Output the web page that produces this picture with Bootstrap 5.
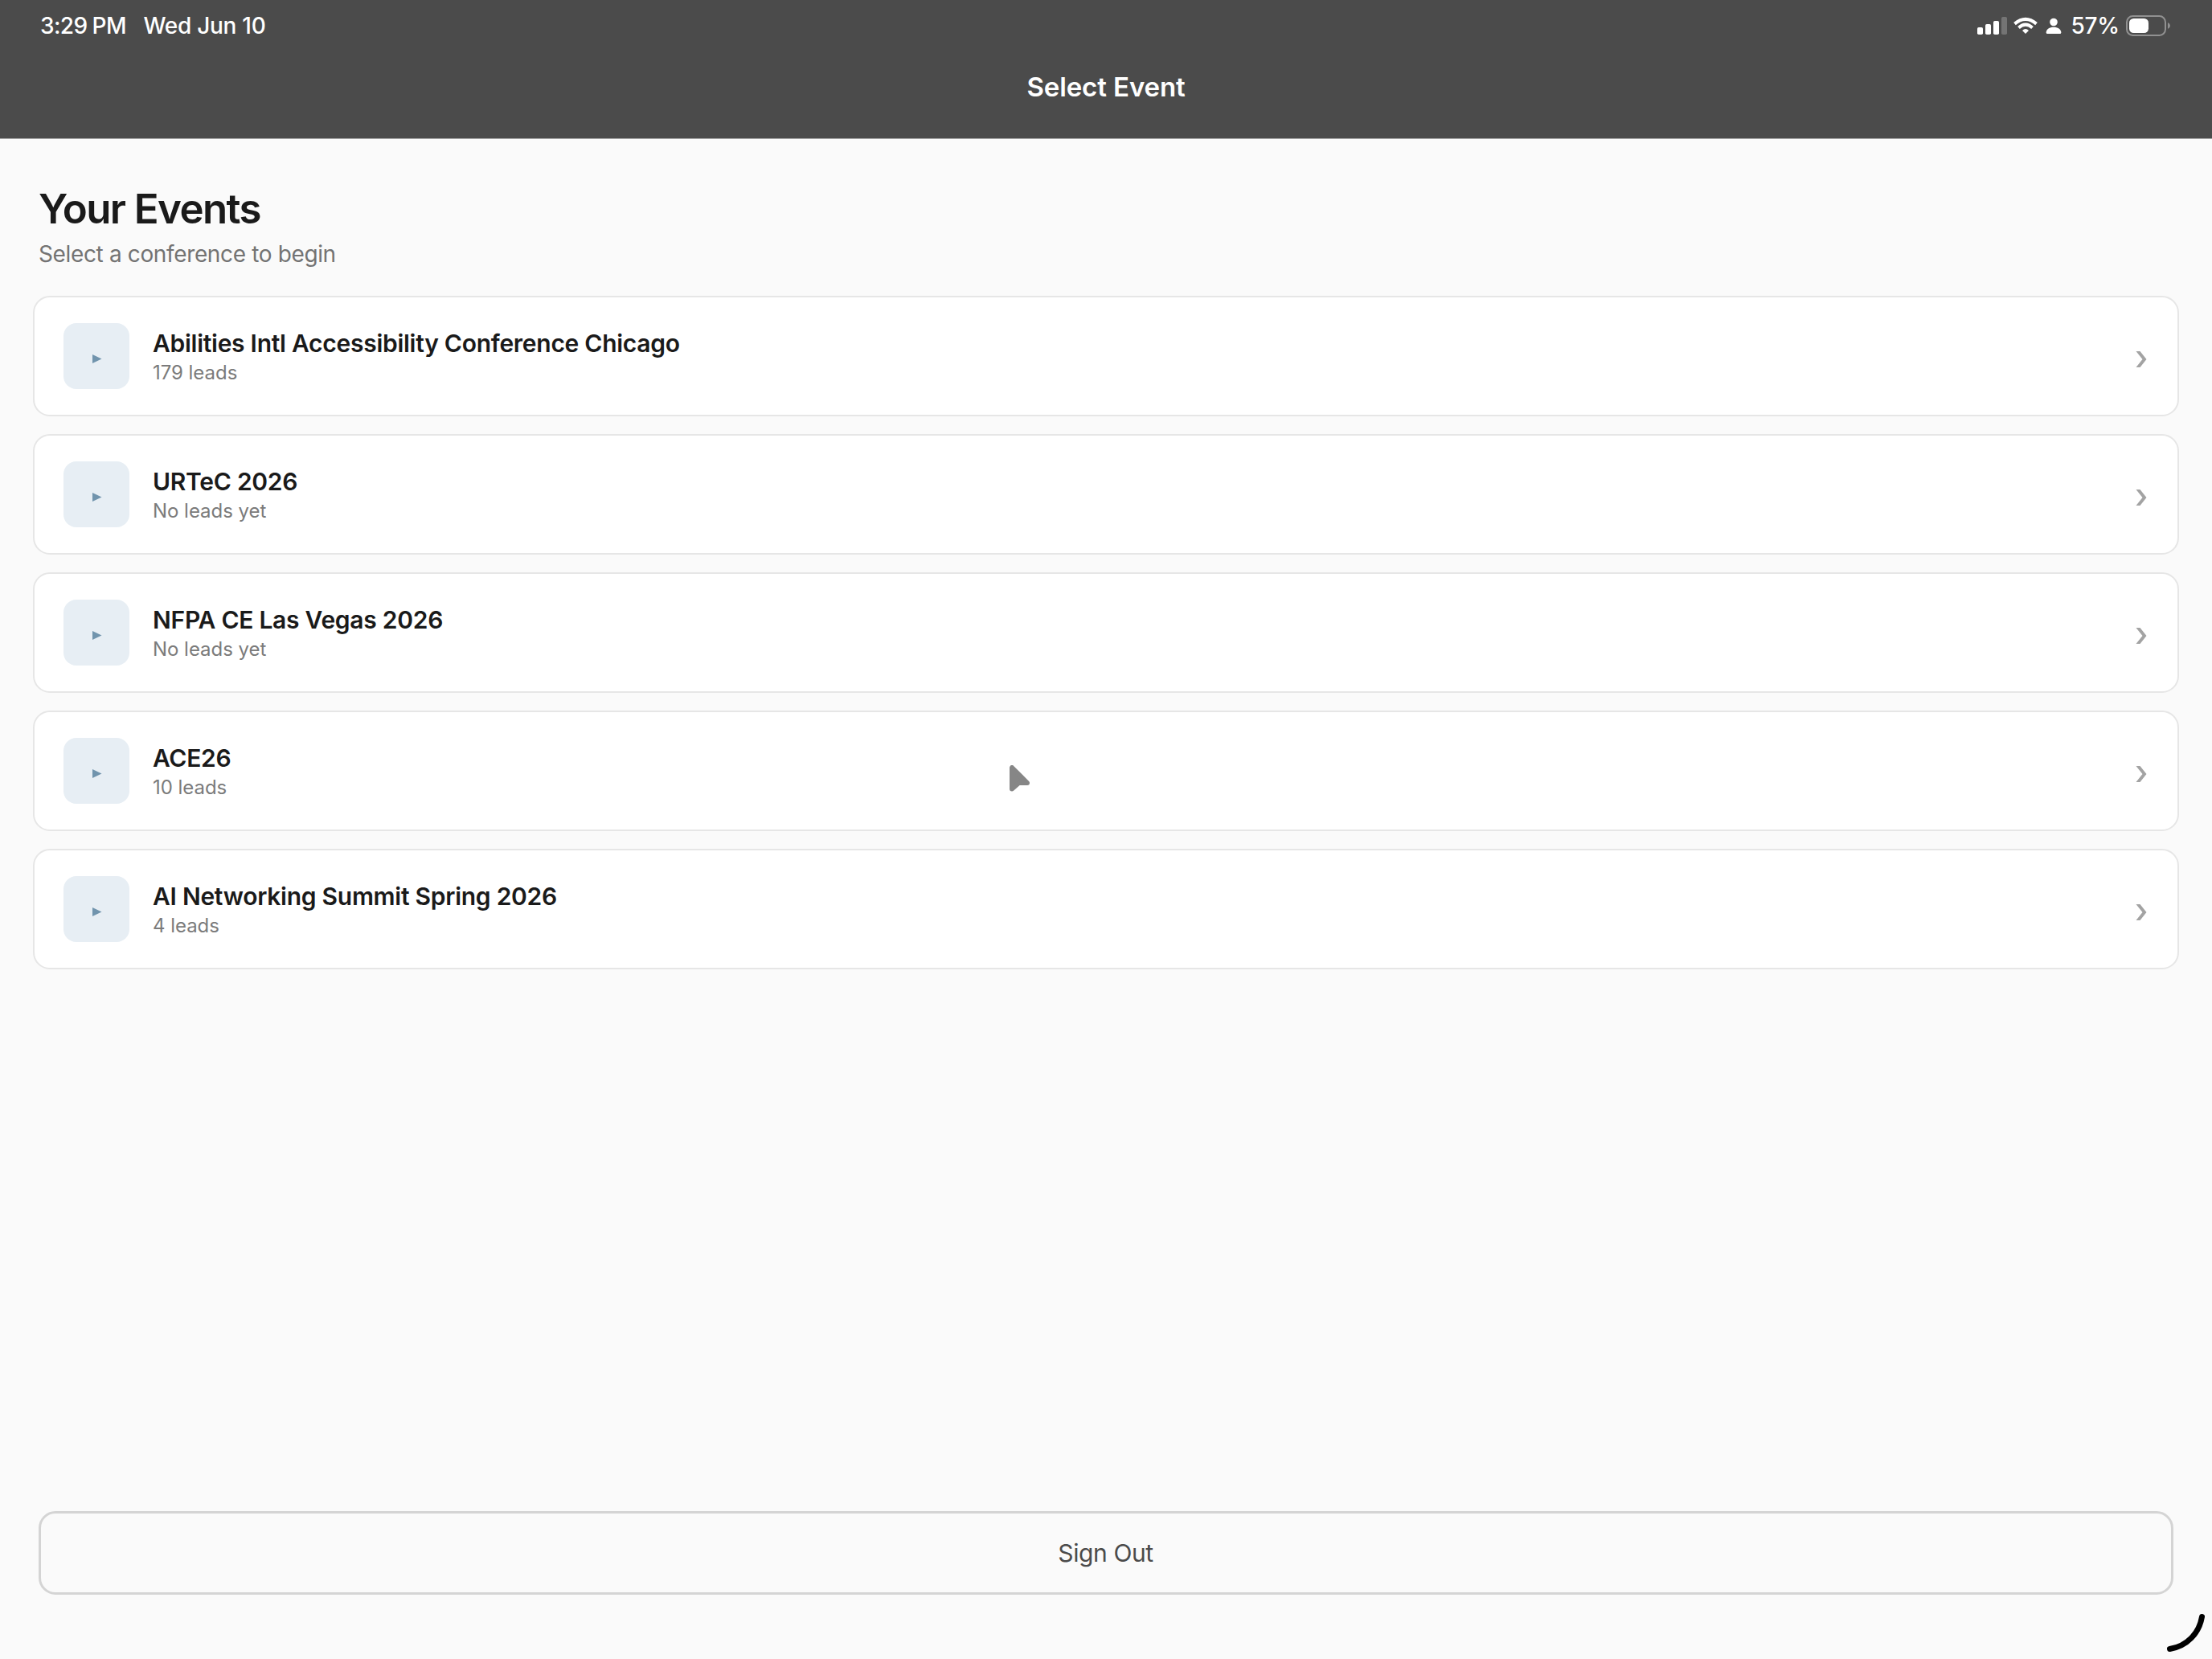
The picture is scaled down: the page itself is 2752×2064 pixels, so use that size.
<!DOCTYPE html>
<html lang="en">
<head>
<meta charset="utf-8">
<meta name="viewport" content="width=device-width, initial-scale=1">
<title>Select Event</title>
<link rel="stylesheet" href="https://cdn.jsdelivr.net/npm/bootstrap@5.3.0/dist/css/bootstrap.min.css">
<style>
  html, body { height: 100%; }
  body { font-family: Inter, "Liberation Sans", sans-serif; background: #fafafa; color: #1a1a1a; overflow: hidden; }
  svg { display: block; flex: none; }
  .app-header { height: 173px; background: #4b4b4b; border-bottom: 1px solid #a9a9a9; color: #fff; }
  .status-bar { height: 64px; padding: 0 51px 0 50px; font-size: 28px; font-weight: 500; line-height: 64px; }
  .status-time { letter-spacing: -.6px; margin-right: 21.5px; }
  .status-time span { margin-left: 6px; }
  .status-date { letter-spacing: -.28px; }
  .status-wifi { margin-left: 7px; }
  .status-person { margin-left: 10px; }
  .status-pct { width: 80px; padding-left: 11.5px; letter-spacing: -.3px; }
  .header-title { font-size: 33px; font-weight: 600; line-height: 42px; margin-top: 23px; letter-spacing: -.1px; }
  .page-head { padding: 57px 48px 0; }
  .page-title { font-size: 51px; font-weight: 600; line-height: 60px; letter-spacing: -1.6px; margin: 0; }
  .page-sub { font-size: 28px; line-height: 36px; margin: 8px 0 0; color: #737373; letter-spacing: -.36px; }
  .event-list { padding: 34px 41px 0; gap: 22px; }
  .event-card { height: 150px; border: 2px solid #e6e6e6; border-radius: 21px; padding: 0 36px; background: #fff; }
  .event-tile { width: 82px; height: 82px; border-radius: 16px; background: #e7eef4; }
  .event-text { margin-left: 29px; }
  .event-name { font-size: 30px; font-weight: 600; line-height: 38px; letter-spacing: -.27px; }
  .event-leads { font-size: 24px; line-height: 32px; padding-top: 2px; margin-bottom: -2px; color: #7b7b7b; letter-spacing: -.04px; }
  .event-chevron { margin-top: 8px; }
  .sign-out { height: 104px; margin: 0 48px 80px; border: 3px solid #d4d4d4; border-radius: 21px; background: transparent; color: #4b4b4b; font-size: 30px; letter-spacing: -.4px; padding: 0 1px 0 0; }
  .pointer { left: 1256px; top: 952px; }
  .corner-arc { left: 2690px; top: 2002px; }
</style>
</head>
<body class="d-flex flex-column">
<header class="app-header flex-shrink-0">
  <div class="status-bar d-flex align-items-center">
    <div class="status-time">3:29<span>PM</span></div>
    <div class="status-date">Wed Jun 10</div>
    <div class="d-flex align-items-center ms-auto">
      <svg width="38" height="24" viewBox="0 0 38 24" fill="#fff"><rect x="0" y="14" width="7" height="9" rx="1.8"/><rect x="10" y="10" width="7" height="13" rx="1.8"/><rect x="20" y="6" width="7" height="17" rx="1.8"/><rect x="30" y="1" width="7" height="22" rx="1.8" fill="#747474"/></svg>
      <svg class="status-wifi" width="30" height="22" viewBox="0 0 30 22" fill="none" stroke="#fff" stroke-width="4"><path d="M1.500 8.600Q15 -2.800 28.500 8.600"/><path d="M6.500 13.400Q15 6 23.500 13.400"/><path d="M15 21L11 17Q15 13.200 19 17Z" fill="#fff" stroke="none"/></svg>
      <svg class="status-person" width="20" height="22" viewBox="0 0 20 22" fill="#fff"><circle cx="10" cy="6.500" r="4.800"/><path d="M.7 19.500C.7 15.300 5 12.700 10 12.700S19.300 15.300 19.300 19.500Q19.300 21 17.800 21H2.200Q.7 21 .7 19.500Z"/></svg>
      <div class="status-pct">57%</div>
      <svg width="56" height="26" viewBox="0 0 56 26"><rect x="1" y="1" width="48" height="24" rx="7.500" fill="none" stroke="#919191" stroke-width="2"/><rect x="4" y="4" width="24" height="18" rx="5.500" fill="#fff"/><path d="M52 9Q55 10.500 55 13T52 17Z" fill="#919191"/></svg>
    </div>
  </div>
  <div class="header-title text-center">Select Event</div>
</header>
<main class="d-flex flex-column flex-grow-1">
  <div class="page-head">
    <h1 class="page-title">Your Events</h1>
    <p class="page-sub">Select a conference to begin</p>
  </div>
  <div class="event-list d-flex flex-column">
    <div class="event-card d-flex align-items-center">
      <div class="event-tile"><svg width="82" height="82"><path d="M36 39L47.500 44.500L36 50Z" fill="#7194ad"/></svg></div>
      <div class="event-text"><div class="event-name">Abilities Intl Accessibility Conference Chicago</div><div class="event-leads">179 leads</div></div>
      <svg class="event-chevron ms-auto" width="16" height="22" viewBox="0 0 16 22"><path d="M.5 1H5.500L13.500 11L5.500 21H.5L8.500 11Z" fill="#a3a3a3"/></svg>
    </div>
    <div class="event-card d-flex align-items-center">
      <div class="event-tile"><svg width="82" height="82"><path d="M36 39L47.500 44.500L36 50Z" fill="#7194ad"/></svg></div>
      <div class="event-text"><div class="event-name">URTeC 2026</div><div class="event-leads">No leads yet</div></div>
      <svg class="event-chevron ms-auto" width="16" height="22" viewBox="0 0 16 22"><path d="M.5 1H5.500L13.500 11L5.500 21H.5L8.500 11Z" fill="#a3a3a3"/></svg>
    </div>
    <div class="event-card d-flex align-items-center">
      <div class="event-tile"><svg width="82" height="82"><path d="M36 39L47.500 44.500L36 50Z" fill="#7194ad"/></svg></div>
      <div class="event-text"><div class="event-name">NFPA CE Las Vegas 2026</div><div class="event-leads">No leads yet</div></div>
      <svg class="event-chevron ms-auto" width="16" height="22" viewBox="0 0 16 22"><path d="M.5 1H5.500L13.500 11L5.500 21H.5L8.500 11Z" fill="#a3a3a3"/></svg>
    </div>
    <div class="event-card d-flex align-items-center">
      <div class="event-tile"><svg width="82" height="82"><path d="M36 39L47.500 44.500L36 50Z" fill="#7194ad"/></svg></div>
      <div class="event-text"><div class="event-name">ACE26</div><div class="event-leads">10 leads</div></div>
      <svg class="event-chevron ms-auto" width="16" height="22" viewBox="0 0 16 22"><path d="M.5 1H5.500L13.500 11L5.500 21H.5L8.500 11Z" fill="#a3a3a3"/></svg>
    </div>
    <div class="event-card d-flex align-items-center">
      <div class="event-tile"><svg width="82" height="82"><path d="M36 39L47.500 44.500L36 50Z" fill="#7194ad"/></svg></div>
      <div class="event-text"><div class="event-name">AI Networking Summit Spring 2026</div><div class="event-leads">4 leads</div></div>
      <svg class="event-chevron ms-auto" width="16" height="22" viewBox="0 0 16 22"><path d="M.5 1H5.500L13.500 11L5.500 21H.5L8.500 11Z" fill="#a3a3a3"/></svg>
    </div>
  </div>
  <button class="sign-out mt-auto" type="button">Sign Out</button>
</main>
<svg class="pointer position-absolute" width="26" height="33" viewBox="0 0 26 33"><path d="M3 3V29.500L11.500 22H22Z" fill="#868686" stroke="#868686" stroke-width="6" stroke-linejoin="round"/></svg>
<svg class="corner-arc position-absolute" width="60" height="60" viewBox="0 0 60 60"><path d="M49.500 9.500C46 30 31 46 9.500 49.500" fill="none" stroke="#000" stroke-width="7" stroke-linecap="round"/></svg>
<script src="https://cdn.jsdelivr.net/npm/bootstrap@5.3.0/dist/js/bootstrap.bundle.min.js"></script>
</body>
</html>
